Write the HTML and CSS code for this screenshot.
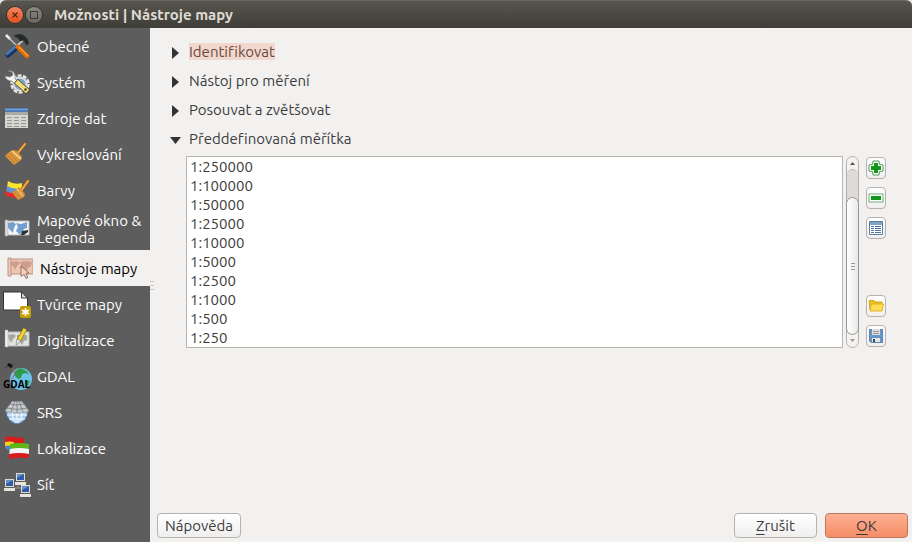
FILE: index.html
```html
<!DOCTYPE html>
<html lang="cs">
<head>
<meta charset="utf-8">
<title>Možnosti | Nástroje mapy</title>
<link rel="stylesheet" href="styles.css">
</head>
<body>
<div class="window">
  <header class="titlebar">
    <button class="wm close" aria-label="Zavřít"><svg width="16" height="16" viewBox="0 0 16 16"><path d="M5.500 5.500l5 5m0-5l-5 5" stroke="#5c2412" stroke-width="1.300"/></svg></button>
    <button class="wm max" aria-label="Maximalizovat"><svg width="16" height="16" viewBox="0 0 16 16"><rect x="4.500" y="4.500" width="7" height="7" fill="none" stroke="#3a3934"/></svg></button>
    <h1>Možnosti | Nástroje mapy</h1>
  </header>
  <div class="body">
    <nav class="sidebar">
      <a href="#"><svg class="ico" viewBox="0 0 26 26"><path d="M2 1l4 4" stroke="#eee" stroke-width="2.500"/><path d="M5 4l9 9" stroke="#ccc" stroke-width="1.300"/><path d="M4 21l8-7" stroke="#17345f" stroke-width="5" stroke-linecap="round"/><path d="M3 20l8-7" stroke="#4a7ab8" stroke-width="2.500" stroke-linecap="round"/><path d="M13 12l6-6" stroke="#c4c8c4" stroke-width="2"/><path d="M10 1.500q6-3 10 0 4 3 5 8l-3 2q-1-4-3-5l-3 1-1-2q-1-2-5-3z" fill="#252b2b"/><path d="M14 13l9 9" stroke="#e86f00" stroke-width="4.500" stroke-linecap="round"/><path d="M15 13l9 9" stroke="#ffb25c" stroke-width="1"/></svg><span>Obecné</span></a>
      <a href="#"><svg class="ico" viewBox="0 0 26 26"><circle cx="16" cy="14" r="8.500" fill="none" stroke="#e4e4e4" stroke-width="2.500" stroke-dasharray="4 1.340"/><circle cx="16" cy="14" r="6.500" fill="#7aa5d6" stroke="#dcdcdc" stroke-width="2"/><path d="M4 1q6-1 7 4v4l5 4-3 3-5-5q-6 0-7-5l5 1 3-2-1-3z" fill="#f2f2ee" stroke="#777" stroke-width=".6"/><path d="M14 13l8 7" stroke="#4f4718" stroke-width="6" stroke-linecap="square"/><path d="M14 13l8 7" stroke="#f0dc78" stroke-width="4.500" stroke-linecap="square"/><circle cx="21.500" cy="19.500" r="1.200" fill="#333"/></svg><span>Systém</span></a>
      <a href="#"><svg class="ico" viewBox="0 0 26 26"><path d="M1 2h23v20H1z" fill="#d3d7cf"/><path d="M1 2h23v4H1z" fill="#4e7dbb"/><path d="M1 3h23v1H1z" fill="#7ba3d6"/><path d="M1 6h23v3H1z" fill="#a9aca6"/><path d="M3 11.500h20M3 14.500h20M3 17.500h20M3 20.500h20" stroke="#92958f" stroke-dasharray="5 2"/></svg><span>Zdroje dat</span></a>
      <a href="#"><svg class="ico" viewBox="0 0 26 26"><path d="M13 12L21 2" stroke="#9d5a13" stroke-width="3.500" stroke-linecap="round"/><path d="M13 12L21 2" stroke="#edac56" stroke-width="2" stroke-linecap="round"/><path d="M9 8l4 1 5 6-1 3-7 5L1 14l4-4z" fill="#d9953d"/><path d="M8 9l9 8" stroke="#ffe0a0" stroke-width="1.200"/><path d="M3 13l8 8M5 11l8 8" stroke="#bd771f" stroke-width=".7"/></svg><span>Vykreslování</span></a>
      <a href="#"><svg class="ico" viewBox="0 -2 26 26"><path d="M4 1q6 4 14 2v6q-8 1-15-2z" fill="#f9e42d"/><path d="M3 6q7 4 14 2v5q-7 2-15-1z" fill="#5e94cf"/><path d="M2 11q6 4 15 1v5q-8 2-16-2z" fill="#ef2929"/><path d="M17 11l7-10" stroke="#9d5a13" stroke-width="3.500" stroke-linecap="round"/><path d="M17 11l7-10" stroke="#edac56" stroke-width="2" stroke-linecap="round"/><path d="M15 7l6 7-1 3-6 3-6-8 4-2z" fill="#d9953d"/><path d="M13 9l6 7" stroke="#ffe0a0"/><path d="M10 11l6 7" stroke="#bd771f" stroke-width=".7"/></svg><span>Barvy</span></a>
      <a href="#" class="tall"><svg class="ico" viewBox="0 0 26 26"><path d="M3 4h22v14H3z" fill="#f7f7f7" stroke="#bbb"/><path d="M4 6l5-1 3 2-2 4-1 5-3-3-3-4zM12 6l5 1 6-2v6l-3 1-2 4-3 1-3-3 2-4z" fill="#729fcf"/><path d="M16 18q2-1 2-4l6-1v2l-4 3z" fill="#2e3436"/><path d="M1 3h3v16H1z" fill="#ddd" stroke="#999" stroke-width=".5"/></svg><span>Mapové okno &amp; Legenda</span></a>
      <a href="#" class="active" aria-current="page"><svg class="ico" viewBox="0 0 26 26"><path d="M3 3h23v15H3z" fill="#ecc4b4" stroke="#bd9484"/><path d="M4 6l6-1 3 2-3 3-2 4-2-4-2-1zM13 6l6-1 6 1-1 4-3 2-2 4-2-3-4-1 1-3z" fill="#ce9d8b"/><path d="M1 2h3v18H1z" fill="#f0c6b4" stroke="#bd9484"/><path d="M14 10l8 7-3 .5 2 4-2 1-2-4-3 2z" fill="#f4cdbd" stroke="#6f5047" stroke-width=".7"/></svg><span>Nástroje mapy</span></a>
      <a href="#"><svg class="ico wide" viewBox="0 0 29 28"><path d="M.5 1h18l6 6v12H.5z" fill="#fff" stroke="#333"/><path d="M18.500 1v6h6z" fill="#ddd" stroke="#333"/><rect x="17" y="15" width="11" height="12" rx="2" fill="#c4a000"/><path d="M22.500 17v8M19 19l7 4M26 19l-7 4" stroke="#fff" stroke-width="1.700"/></svg><span>Tvůrce mapy</span></a>
      <a href="#"><svg class="ico" viewBox="0 0 26 26"><path d="M3 4h22v14H3z" fill="#e2e4df" stroke="#bbb"/><path d="M4 7l6-1 2 2-3 3-2 4-2-4zM13 7h10v5l-3 1-2 4-2-3-3-2z" fill="#a5a8a1"/><path d="M1 2h3v17H1z" fill="#f2f2f0" stroke="#999" stroke-width=".5"/><path d="M15 12l6-11" stroke="#8f6e00" stroke-width="4.500"/><path d="M15 12l6-11" stroke="#f4d52c" stroke-width="3.200"/><path d="M12 17l1-6 4 2z" fill="#eee" stroke="#555" stroke-width=".5"/></svg><span>Digitalizace</span></a>
      <a href="#"><svg class="ico wide" viewBox="0 0 29 28"><circle cx="18" cy="16" r="11" fill="#6ec1e8"/><path d="M12 8l5-3 5 2 1 3-4 1-1 4-3 1-4-4zM22 17l5 1-2 5-3-2zM20 7l4 1 2 4-3-2z" fill="#2f9b48"/><path d="M9 5l3 6-3 5" fill="none" stroke="#c94a5a" stroke-width=".8"/><path d="M1 5l11-5" stroke="#444" stroke-width="1"/><path d="M5 1l4 3" stroke="#111" stroke-width="3"/><text x="0" y="25" class="gdal">GDAL</text></svg><span>GDAL</span></a>
      <a href="#"><svg class="ico" viewBox="0 0 26 26"><path d="M2.500 11a10.500 12.500 0 0 0 21 0z" fill="#a9cef2" stroke="#5e8dbf"/><path d="M3 15h20M5 19h16M13 12v11M8 12q0 7 4 11M18 12q0 7-4 11" fill="none" stroke="#fff"/><path d="M8 1.500h10l7 9.500q-12 4-24 0z" fill="#c7cbcf" stroke="#999" stroke-width=".6"/><path d="M6 4q7 2 14 0M3 8q10 3 20 0M11 1L7 12M15 1l4 11M13 1v12" fill="none" stroke="#73797c" stroke-width=".8"/></svg><span>SRS</span></a>
      <a href="#"><svg class="ico" viewBox="0 0 26 26"><path d="M1 1q5-1 10 0t9 1v5q-5 1-10 0t-9 0z" fill="#d81b1b"/><path d="M1 6q4-1 9 0v5q-5-1-9 0z" fill="#f5d020"/><path d="M1 10q4-1 6 0v5q-3 0-5-2z" fill="#4f85c8"/><path d="M6 8q9-2 19 0v5q-9-1-19 1z" fill="#5eb61a"/><path d="M6 13q9-2 19 0v5q-10-1-20 1z" fill="#f4f4f4"/><path d="M5 18q10-2 20 0v4q-10-1-20 1z" fill="#d81b1b"/></svg><span>Lokalizace</span></a>
      <a href="#"><svg class="ico wide" viewBox="0 0 29 28"><path d="M11 17h7M15 12v5" stroke="#999"/><g id="pc"><rect x="2" y="8" width="9" height="8" fill="#dcdcd4"/><rect x="3" y="9" width="7" height="6" fill="#2f5da8"/><path d="M3 9h7l-7 4z" fill="#6a91ca"/><path d="M1 17h11v3H1z" fill="#e4e4dc"/></g><use href="#pc" x="11" y="-6"/><use href="#pc" x="16" y="6"/></svg><span>Síť</span></a>
    </nav>
    <div class="splitter"><i></i><i></i><i></i></div>
    <main>
      <section class="groups">
        <button class="group" aria-expanded="false"><svg viewBox="0 0 12 12"><path d="M3 0l7 6-7 6z"/></svg><mark>Identifikovat</mark></button>
        <button class="group" aria-expanded="false"><svg viewBox="0 0 12 12"><path d="M3 0l7 6-7 6z"/></svg><span>Nástoj pro měření</span></button>
        <button class="group" aria-expanded="false"><svg viewBox="0 0 12 12"><path d="M3 0l7 6-7 6z"/></svg><span>Posouvat a zvětšovat</span></button>
        <button class="group" aria-expanded="true"><svg viewBox="0 0 12 12"><path d="M1 3h11L6.500 10z"/></svg><span>Předdefinovaná měřítka</span></button>
        <div class="scales">
          <ul class="list">
            <li>1:250000</li><li>1:100000</li><li>1:50000</li><li>1:25000</li><li>1:10000</li><li>1:5000</li><li>1:2500</li><li>1:1000</li><li>1:500</li><li>1:250</li>
          </ul>
          <div class="scrollbar">
            <svg class="arrow" viewBox="0 0 11 12"><path d="M3 8h5L5.500 5z" fill="#555"/></svg>
            <div class="track"></div>
            <div class="thumb"><i></i><i></i><i></i></div>
            <svg class="arrow" viewBox="0 0 11 12"><path d="M3 4h5L5.500 7z" fill="#999"/></svg>
          </div>
          <div class="tools">
            <button class="tool" aria-label="Přidat"><svg viewBox="0 0 16 16"><path d="M5 1h6l.5 3.500L15 5v6l-3.500.5L11 15H5l-.5-3.500L1 11V5l3.500-.5z" fill="#fff" stroke="#4d9c55"/><path d="M6 3h4v3h3v4h-3v3H6v-3H3V6h3z" fill="#14961c"/></svg></button>
            <button class="tool" aria-label="Odebrat"><svg viewBox="0 0 16 16"><rect x="1" y="4" width="14" height="8" fill="#fff" stroke="#74b078"/><path d="M3 6h10v4H3z" fill="#14961c"/></svg></button>
            <button class="tool" aria-label="Výchozí měřítka"><svg viewBox="0 0 16 16"><path d="M1.500 1.500h13v13h-13z" fill="#fff" stroke="#5b7f9f"/><path d="M2 2h12v3H2z" fill="#82a5c2"/><path d="M3 6.500h3M3 8.500h3M3 10.500h3M3 12.500h3M7 6.500h6M7 8.500h6M7 10.500h6M7 12.500h6" stroke="#4e7291"/></svg></button>
            <button class="tool open" aria-label="Otevřít"><svg viewBox="0 0 16 16"><path d="M1 2.500h5l1 1.500h7v8H2z" fill="#e7bd20" stroke="#d3aa1c"/><path d="M3.500 6h12l-1.500 7H2z" fill="#ffdc55" stroke="#dfb62a"/></svg></button>
            <button class="tool" aria-label="Uložit"><svg viewBox="0 0 16 16"><path d="M1.500 1.500h13v13H3l-1.500-1.500z" fill="#6695c9" stroke="#5c86b6"/><path d="M4 1h8v6H4z" fill="#ddd"/><path d="M5 3.500h6M5 5.500h6" stroke="#999"/><path d="M4 10h8v4H4z" fill="#e4e7e8"/><path d="M5 11h2v3H5z" fill="#345"/></svg></button>
          </div>
        </div>
      </section>
      <footer>
        <button class="btn">Nápověda</button>
        <button class="btn cancel"><u>Z</u>rušit</button>
        <button class="btn ok"><u>O</u>K</button>
      </footer>
    </main>
  </div>
</div>
</body>
</html>
```
FILE: styles.css
```css
* { box-sizing: border-box; }
body {
  margin: 0;
  background: #e4e4e4;
  font: 15px/17px Ubuntu, "Noto Sans", sans-serif;
  font-variant-ligatures: none;
  color: #3c3c3c;
}
button { font: inherit; font-variant-ligatures: none; color: inherit; }
.window {
  min-height: 100vh;
  display: flex;
  flex-direction: column;
}
.titlebar {
  height: 28px;
  display: flex;
  align-items: center;
  gap: 3px;
  padding: 0 7px;
  border-radius: 6px 6px 0 0;
  border-top: 1px solid #6a6963;
  background: linear-gradient(#57554d, #3e3d38);
}
.titlebar h1 {
  margin: 0 0 0 9px;
  font-size: 15px;
  color: #dfdbd2;
}
.wm {
  width: 16px;
  height: 16px;
  padding: 0;
  border: 0;
  border-radius: 50%;
  box-shadow: 0 0 0 1px #33322e;
  display: flex;
}
.close { background: linear-gradient(#f68662, #e2501f); }
.max { background: linear-gradient(#8b8980, #696860); }
.body { flex: 1; display: flex; }
.sidebar {
  width: 150px;
  flex: none;
  background: #5d5d5d;
}
.sidebar a {
  height: 36px;
  padding: 0 4px;
  display: flex;
  align-items: center;
  gap: 7px;
  color: #fff;
  text-decoration: none;
}
.sidebar .tall { height: 42px; }
.sidebar .active {
  padding-left: 7px;
  background: #f2f1f0;
  color: #000;
}
.ico { width: 26px; height: 26px; flex: none; margin-top: 2px; }
.ico.wide { width: 29px; height: 28px; margin: 2px -2px 0 -1px; }
.gdal { font: bold 10px "Open Sans", "Liberation Sans", sans-serif; fill: #000; }
.splitter {
  width: 4px;
  flex: none;
  display: flex;
  flex-direction: column;
  align-items: center;
  justify-content: center;
  gap: 3px;
  background: #f2f1f0;
}
.splitter i { width: 4px; height: 1px; background: #c8c7c5; }
main {
  flex: 1;
  display: flex;
  flex-direction: column;
  justify-content: space-between;
  padding: 9px 4px 4px 3px;
  background: #f2f1f0;
}
.group {
  display: flex;
  align-items: center;
  gap: 8px;
  height: 29px;
  padding: 0 0 0 12px;
  border: 0;
  background: none;
}
.group svg { width: 12px; height: 12px; margin-top: 2px; fill: #333; }
.group mark { background: #f2d7cc; color: #6b4a40; }
.scales {
  display: flex;
  gap: 3px;
  margin: 3px 22px 0 29px;
}
.list {
  flex: 1;
  margin: 0;
  padding: 0 3px;
  list-style: none;
  border: 1px solid #b8b5b1;
  background: #fff;
}
.list li { height: 19px; line-height: 20px; }
.scrollbar {
  width: 13px;
  display: flex;
  flex-direction: column;
  border: 1px solid #b4b2af;
  border-radius: 7px;
  background: #f4f3f2;
}
.arrow { width: 11px; height: 12px; }
.track {
  height: 34px;
  margin-bottom: -6px;
  border-top: 1px solid #bbb;
  border-radius: 6px 6px 0 0;
  background: #dcdbd9;
}
.thumb {
  flex: 1;
  margin: 0 -1px;
  display: flex;
  flex-direction: column;
  align-items: center;
  justify-content: center;
  gap: 2px;
  border: 1px solid #989693;
  border-radius: 7px;
  background: linear-gradient(90deg, #fff, #e9e8e7);
}
.thumb i { width: 4px; height: 1px; background: #999; }
.tools {
  margin: 1px 0 1px 4px;
  display: flex;
  flex-direction: column;
  gap: 8px;
}
.tool {
  width: 20px;
  height: 22px;
  padding: 0;
  display: flex;
  align-items: center;
  justify-content: center;
  border: 1px solid #b6b3af;
  border-radius: 4px;
  background: linear-gradient(#fff, #f0efee);
}
.tool svg { width: 16px; height: 16px; }
.tool.open { margin-top: auto; }
footer { display: flex; gap: 8px; }
.btn {
  min-width: 83px;
  height: 25px;
  padding: 0 7px;
  border: 1px solid #b6b3af;
  border-radius: 4px;
  background: linear-gradient(#fff, #efeeed);
}
.btn u { text-underline-offset: 3px; }
.cancel { margin-left: auto; }
.ok {
  border-color: #b97a62;
  background: linear-gradient(#ffb093, #f58d66);
}
```
